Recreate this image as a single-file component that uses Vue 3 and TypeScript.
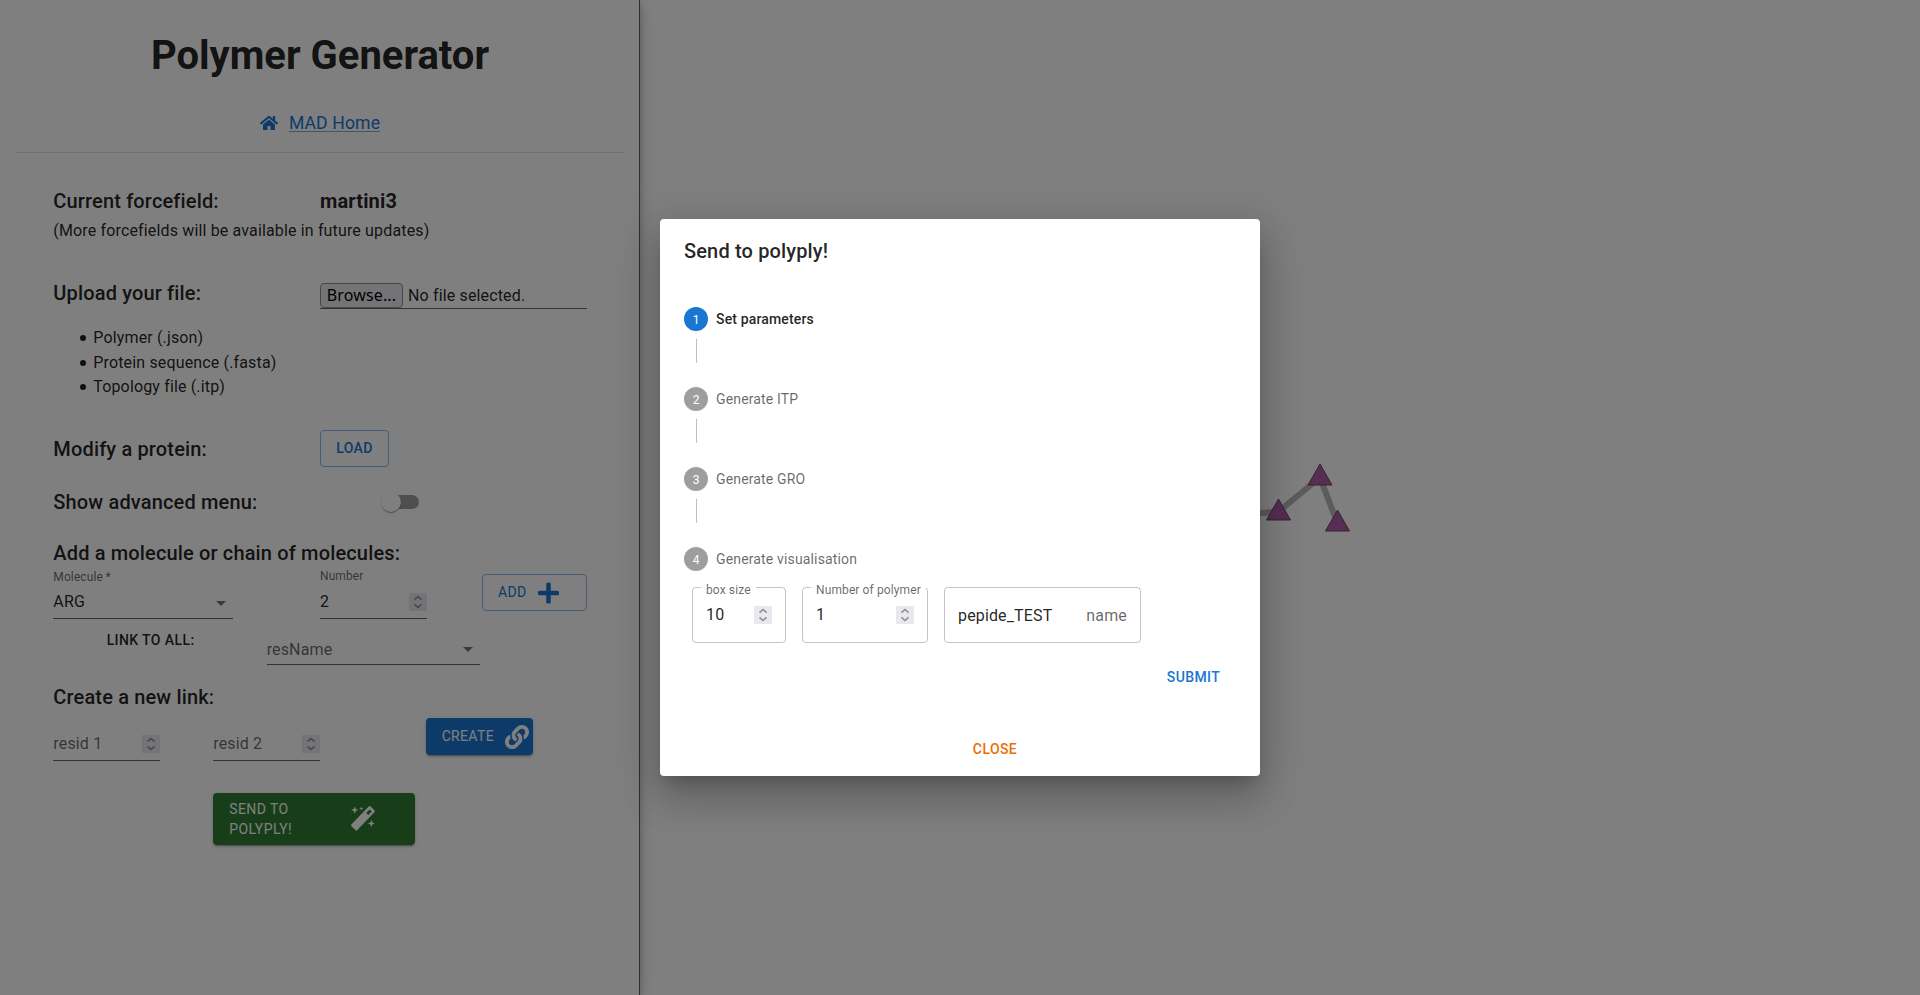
<script setup lang="ts">
import { ref } from 'vue'

const fileKinds = ['Polymer (.json)', 'Protein sequence (.fasta)', 'Topology file (.itp)']
const steps = ['Set parameters', 'Generate ITP', 'Generate GRO', 'Generate visualisation']
const activeStep = ref(0)
const nodes = [
  { x: 680, y: 475.5 },
  { x: 638.5, y: 510.5 },
  { x: 697.5, y: 521.5 },
]
</script>

<template>
  <div class="page">
    <aside class="sidebar">
      <h1>Polymer Generator</h1>
      <div class="home">
        <svg class="home-icon" viewBox="0 0 576 512"><path d="M280.4 148.3 96 300.1V464a16 16 0 0 0 16 16l112-.3a16 16 0 0 0 16-16V368a16 16 0 0 1 16-16h64a16 16 0 0 1 16 16v95.6a16 16 0 0 0 16 16l112 .4a16 16 0 0 0 16-16V300L295.7 148.300a12.200 12.200 0 0 0-15.300 0zM571.600 251.500 488 182.600V44a12 12 0 0 0-12-12h-56a12 12 0 0 0-12 12v72.600L318.500 43a48 48 0 0 0-61 0L4.300 251.500a12 12 0 0 0-1.600 16.900l25.500 31a12 12 0 0 0 16.900 1.600l235.200-193.700a12.200 12.200 0 0 1 15.300 0L530.900 301a12 12 0 0 0 16.900-1.600l25.500-31a12 12 0 0 0-1.700-16.900z" /></svg>
        <a>MAD Home</a>
      </div>
      <hr />
      <section class="grid forcefield">
        <h6 class="left">Current forcefield:</h6>
        <h6 class="right strong">martini3</h6>
        <p>(More forcefields will be available in future updates)</p>
      </section>
      <section class="grid upload">
        <h6 class="left">Upload your file:</h6>
        <div class="file"><span class="browse">Browse...</span><span>No file selected.</span></div>
      </section>
      <ul>
        <li v-for="kind in fileKinds" :key="kind">{{ kind }}</li>
      </ul>
      <section class="grid modify">
        <h6 class="left">Modify a protein:</h6>
        <button class="btn outlined load">LOAD</button>
      </section>
      <section class="grid advanced">
        <h6 class="left">Show advanced menu:</h6>
        <span class="switch"><i class="track"></i><i class="thumb"></i></span>
      </section>
      <h6 class="add-title">Add a molecule or chain of molecules:</h6>
      <section class="grid molecule">
        <div class="field select mol">
          <label>Molecule&thinsp;*</label>
          <div class="value"><span>ARG</span><svg class="caret" viewBox="0 0 24 24"><path d="M7 10l5 5 5-5z" /></svg></div>
        </div>
        <div class="field num">
          <label>Number</label>
          <div class="value"><span>2</span><span class="spin"><svg viewBox="0 0 18 18"><path d="M5.500 6.700 9 3.500l3.500 3.200M5.500 11.300 9 14.500l3.500-3.200" /></svg></span></div>
        </div>
        <button class="btn outlined add">ADD
          <svg viewBox="0 0 448 512"><path d="M416 208H272V64a32 32 0 0 0-32-32h-32a32 32 0 0 0-32 32v144H32a32 32 0 0 0-32 32v32a32 32 0 0 0 32 32h144v144a32 32 0 0 0 32 32h32a32 32 0 0 0 32-32V304h144a32 32 0 0 0 32-32v-32a32 32 0 0 0-32-32z" /></svg>
        </button>
      </section>
      <section class="grid link-all">
        <span class="link-label">LINK TO ALL:</span>
        <div class="field res">
          <div class="value"><span class="ghost">resName</span><svg class="caret" viewBox="0 0 24 24"><path d="M7 10l5 5 5-5z" /></svg></div>
        </div>
      </section>
      <h6 class="create-title">Create a new link:</h6>
      <section class="grid create">
        <div v-for="n in 2" :key="n" class="field" :class="'resid' + n">
          <div class="value"><span class="ghost">resid {{ n }}</span><span class="spin"><svg viewBox="0 0 18 18"><path d="M5.500 6.700 9 3.500l3.500 3.200M5.500 11.300 9 14.500l3.500-3.200" /></svg></span></div>
        </div>
        <button class="btn contained primary">CREATE
          <svg viewBox="0 0 512 512"><path d="M326.612 185.391c59.747 59.809 58.927 155.698.36 214.590-.110.120-.240.250-.360.370l-67.200 67.200c-59.270 59.270-155.699 59.262-214.960 0-59.270-59.260-59.270-155.700 0-214.960l37.106-37.106c9.840-9.840 26.786-3.300 27.294 10.606.648 17.722 3.826 35.527 9.690 52.721 1.986 5.822.567 12.262-3.783 16.612l-13.087 13.087c-28.026 28.026-28.905 73.660-1.155 101.960 28.024 28.579 74.086 28.749 102.325.510l67.200-67.190c28.191-28.191 28.073-73.757 0-101.830-3.701-3.694-7.429-6.564-10.341-8.569a16.037 16.037 0 0 1-6.947-12.606c-.396-10.567 3.348-21.456 11.698-29.806l21.054-21.055c5.521-5.521 14.182-6.199 20.584-1.731a152.482 152.482 0 0 1 20.522 17.197zM467.547 44.449c-59.261-59.262-155.690-59.270-214.960 0l-67.200 67.200c-.120.120-.250.250-.360.370-58.566 58.892-59.387 154.781.360 214.590a152.454 152.454 0 0 0 20.521 17.196c6.402 4.468 15.064 3.789 20.584-1.731l21.054-21.055c8.350-8.350 12.094-19.239 11.698-29.806a16.037 16.037 0 0 0-6.947-12.606c-2.912-2.005-6.640-4.875-10.341-8.569-28.073-28.073-28.191-73.639 0-101.830l67.200-67.190c28.239-28.239 74.300-28.069 102.325.510 27.750 28.300 26.872 73.934-1.155 101.960l-13.087 13.087c-4.350 4.350-5.769 10.790-3.783 16.612 5.864 17.194 9.042 34.999 9.690 52.721.509 13.906 17.454 20.446 27.294 10.606l37.106-37.106c59.271-59.259 59.271-155.699.001-214.959z" /></svg>
        </button>
      </section>
      <button class="btn contained send">
        <span>SEND TO POLYPLY!</span>
        <svg viewBox="0 0 24 25"><path fill-rule="evenodd" d="M17.700.6a1.400 1.400 0 0 1 2 0l3.700 3.700a1.400 1.400 0 0 1 0 2L6.300 24a1.400 1.400 0 0 1-2 0L.5 20.200a1.400 1.400 0 0 1 0-2zM15.200 6.900l2 2 3.500-3.500-2-2z" /><path d="M3.700.5l1 2.600 2.600 1-2.600 1-1 2.600-1-2.600-2.600-1 2.600-1zM10.300.4l.6 1.500 1.500.6-1.500.6-.6 1.500-.6-1.500-1.500-.6 1.500-.6zM20.300 14l1 2.500 2.500 1-2.500 1-1 2.500-1-2.500-2.500-1 2.500-1z" /></svg>
      </button>
    </aside>

    <main class="canvas">
      <svg class="graph" viewBox="0 0 1280 995">
        <path class="edges" d="M560 519 638.500 511.500 680 477.500 697.500 523.500" />
        <path v-for="(n, i) in nodes" :key="i" class="node" :transform="`translate(${n.x} ${n.y})`" d="M0-11.500 12 9.500H-12z" />
      </svg>
    </main>

    <div class="backdrop">
      <div class="dialog">
        <h2>Send to polyply!</h2>
        <div class="stepper">
          <template v-for="(s, i) in steps" :key="s">
            <div v-if="i > 0" class="connector"></div>
            <div class="step" :class="{ active: i === activeStep }">
              <span class="dot">{{ i + 1 }}</span><span>{{ s }}</span>
            </div>
          </template>
        </div>
        <div class="params">
          <fieldset class="box-size">
            <legend><span>box size</span></legend>
            <div class="input"><span>10</span><span class="spin"><svg viewBox="0 0 18 18"><path d="M5.500 6.700 9 3.500l3.500 3.200M5.500 11.300 9 14.500l3.500-3.200" /></svg></span></div>
          </fieldset>
          <fieldset class="count">
            <legend><span>Number of polymer</span></legend>
            <div class="input"><span>1</span><span class="spin"><svg viewBox="0 0 18 18"><path d="M5.500 6.700 9 3.500l3.500 3.200M5.500 11.300 9 14.500l3.500-3.200" /></svg></span></div>
          </fieldset>
          <div class="name-box"><span>pepide_TEST</span><span class="ghost">name</span></div>
        </div>
        <button class="btn text submit">SUBMIT</button>
        <button class="btn text close">CLOSE</button>
      </div>
    </div>
  </div>
</template>

<style>
body { overflow: hidden; }
</style>

<style scoped>
* { box-sizing: border-box; }
.page { position: relative; display: flex; width: 1920px; height: 995px; overflow: hidden; background: #fff; color: rgba(0, 0, 0, .87); font: 400 16px/24px Roboto, sans-serif; letter-spacing: .15px; }
.sidebar { position: relative; z-index: 1; width: 640px; height: 995px; background: #fff; display: flex; flex-direction: column; border-right: 1px solid #5c5c5c; box-shadow: 0 3px 5px -1px rgba(0, 0, 0, .2), 0 6px 10px 0 rgba(0, 0, 0, .14), 0 1px 18px 0 rgba(0, 0, 0, .12); }
.canvas { width: 1280px; height: 995px; }
.graph { display: block; width: 1280px; height: 995px; }
.edges { fill: none; stroke: #b8b8b8; stroke-width: 6; }
.node { fill: #aa5ca4; stroke: #70406c; stroke-width: 1; }
h1 { margin: 32px 0 0; padding-left: 1px; font-size: 40px; line-height: 48px; font-weight: 700; letter-spacing: 0; text-align: center; }
h6 { margin: 0; font-size: 20px; line-height: 32px; font-weight: 500; letter-spacing: .15px; }
p { margin: 0; }
.home { display: flex; justify-content: center; align-items: center; margin-top: 30px; height: 26px; font-size: 17.600px; letter-spacing: .12px; color: #1976d2; padding-left: 1px; }
.home a { text-decoration: underline; text-decoration-color: rgba(25, 118, 210, .6); text-decoration-thickness: 1px; text-underline-offset: 2px; }
.home-icon { width: 18px; height: 16px; margin-right: 11px; fill: #1976d2; }
hr { width: 608px; height: 1px; margin: 16px 0 0 16px; border: 0; background: rgba(0, 0, 0, .12); flex: none; }
.grid { display: grid; grid-template-columns: repeat(12, 53.333px); width: 640px; }
.left { grid-column: 2 / 7; }
.right { grid-column: 7 / 12; }
.strong { font-weight: 700; }
.forcefield { margin-top: 32px; }
.forcefield p { grid-column: 2 / 12; line-height: 24px; margin-top: 2px; }
.upload { margin-top: 34px; height: 32px; }
.file { grid-column: 7 / 12; height: 32px; border-bottom: 1px solid rgba(0, 0, 0, .6); display: flex; align-items: flex-end; white-space: nowrap; }
.browse { height: 25px; width: 83px; margin-right: 5px; border: 1px solid #8f8f9d; border-radius: 4px; background: #e9e9ed; color: #000; text-align: center; font: 16px/23px "Noto Sans", sans-serif; letter-spacing: .15px; }
ul { margin: 17px 0 0; padding: 0 0 0 79.600px; line-height: 24.500px; list-style: none; }
li { display: flex; align-items: center; }
li::before { content: ""; width: 6px; height: 6px; margin-right: 7.700px; border-radius: 50%; background: currentColor; }
.modify { margin-top: 30.500px; height: 37px; }
.modify .left { margin-top: 3px; }
.btn { display: flex; align-items: center; font: 500 14px/24.500px Roboto, sans-serif; letter-spacing: .4px; border-radius: 4px; border: 0; background: none; padding: 0; }
.outlined { border: 1px solid rgba(25, 118, 210, .5); color: #1976d2; }
.load { grid-column: 7 / 9; width: 69px; height: 37px; justify-content: center; }
.advanced { margin-top: 19px; height: 32px; }
.switch { grid-column: 7 / 10; position: relative; width: 38px; height: 20px; margin: 6px 0 0 61.500px; }
.track { position: absolute; left: 4px; top: 3px; width: 34px; height: 14px; border-radius: 7px; background: #9e9e9e; }
.thumb { position: absolute; left: 0; top: 0; width: 20px; height: 20px; border-radius: 50%; background: #fff; box-shadow: 0 2px 1px -1px rgba(0, 0, 0, .2), 0 1px 1px rgba(0, 0, 0, .14), 0 1px 3px rgba(0, 0, 0, .12); }
.add-title { margin: 19px 0 0 53.300px; }
.molecule { height: 48px; }
.field { display: flex; flex-direction: column; justify-content: flex-end; border-bottom: 1px solid rgba(0, 0, 0, .6); }
.field label { font-size: 12px; line-height: 15px; color: rgba(0, 0, 0, .6); letter-spacing: .11px; }
.mol label { margin-bottom: 1px; }
.num label { margin-bottom: 2px; }
.field .value { display: flex; align-items: center; justify-content: space-between; height: 32px; line-height: 32px; }
.caret { width: 24px; height: 24px; margin-top: 1px; fill: rgba(0, 0, 0, .54); }
.spin { width: 18px; height: 18px; background: #e8e8ee; flex: none; }
.spin svg { display: block; width: 18px; height: 18px; fill: none; stroke: #8f8f9d; stroke-width: 1.600; }
.mol { grid-column: 2 / 6; width: 180px; }
.num { grid-column: 7 / 9; }
.add { grid-column: 10 / 12; margin: 5px 0 0 2px; width: 105px; height: 37px; padding-left: 15px; font-weight: 400; }
.add svg { width: 21px; height: 24px; margin-left: 11px; fill: #1976d2; }
.link-all { height: 49px; }
.link-label { grid-column: 3 / 6; font-size: 14px; font-weight: 500; line-height: 24px; margin-top: 11px; letter-spacing: .4px; }
.res { grid-column: 6 / 10; height: 48px; }
.ghost { color: rgba(0, 0, 0, .6); }
.res .ghost { padding-top: 3px; }
.create-title { margin: 15px 0 0 53.300px; }
.create { margin-top: 5px; height: 43px; }
.resid1 { grid-column: 2 / 4; }
.resid2 { grid-column: 5 / 7; }
.contained { color: #fff; font-weight: 400; box-shadow: 0 3px 1px -2px rgba(0, 0, 0, .2), 0 2px 2px rgba(0, 0, 0, .14), 0 1px 5px rgba(0, 0, 0, .12); }
.primary { grid-column: 9 / 11; height: 37px; margin-left: -1px; background: #1976d2; padding-left: 16px; letter-spacing: .35px; }
.primary svg { width: 24px; height: 24px; margin-left: 11px; fill: #fff; }
.send { margin: 32px 0 0 213.300px; width: 202px; height: 52px; background: #2e7d32; padding: 0 0 1px 16px; text-align: left; line-height: 20px; }
.send span { width: 80px; }
.send svg { width: 24px; height: 25px; margin-left: 42px; fill: #fff; }
.backdrop { position: absolute; inset: 0; z-index: 2; background: rgba(0, 0, 0, .5); display: flex; justify-content: center; align-items: center; }
.dialog { width: 600px; height: 557px; background: #fff; border-radius: 4px; box-shadow: 0 11px 15px -7px rgba(0, 0, 0, .2), 0 24px 38px 3px rgba(0, 0, 0, .14), 0 9px 46px 8px rgba(0, 0, 0, .12); display: flex; flex-direction: column; padding: 16px 24px 8px; }
.dialog > * { flex: none; }
h2 { margin: 0; font-size: 20px; line-height: 32px; font-weight: 500; letter-spacing: .15px; }
.stepper { margin-top: 40px; font-size: 14px; line-height: 20px; color: rgba(0, 0, 0, .6); }
.step { display: flex; align-items: center; height: 24px; gap: 8px; }
.active { color: rgba(0, 0, 0, .87); font-weight: 500; }
.dot { width: 24px; height: 24px; border-radius: 50%; background: #9e9e9e; color: #fff; font-size: 12px; line-height: 26px; font-weight: 400; text-align: center; letter-spacing: 0; }
.active .dot { background: #1976d2; }
.connector { height: 24px; margin: 8px 0 24px 12px; border-left: 1px solid #bdbdbd; }
.params { display: flex; margin: 11px 0 0 8px; height: 61px; align-items: flex-end; }
fieldset { height: 61px; margin: 0; padding: 0 13px; border: 1px solid rgba(0, 0, 0, .23); border-radius: 4px; min-width: 0; }
legend { height: 11px; padding: 0 5px; margin-left: -5px; font-size: 12px; letter-spacing: .11px; color: rgba(0, 0, 0, .6); white-space: nowrap; overflow: visible; }
legend span { display: block; line-height: 16px; }
.input { display: flex; justify-content: space-between; align-items: center; margin-top: 10px; height: 24px; }
.box-size { width: 94px; }
.count { width: 126px; margin-left: 16px; }
.name-box { width: 197px; height: 56px; margin-left: 16px; border: 1px solid rgba(0, 0, 0, .23); border-radius: 4px; display: flex; justify-content: space-between; align-items: center; padding: 2px 13px 0; }
.text { justify-content: center; height: 36px; }
.submit { align-self: flex-end; width: 69px; margin: 16px 8px 0 0; color: #1976d2; }
.close { align-self: center; width: 64px; margin: 36px 0 0 70px; color: #ed6c02; }
</style>
